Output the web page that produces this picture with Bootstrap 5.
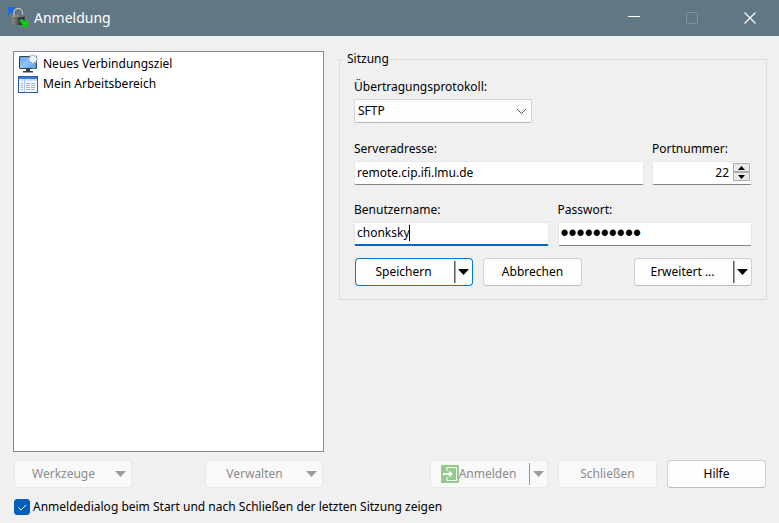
<!DOCTYPE html>
<html lang="de">
<head>
<meta charset="utf-8">
<meta name="viewport" content="width=device-width, initial-scale=1">
<title>Anmeldung</title>
<link href="https://cdn.jsdelivr.net/npm/bootstrap@5.3.0/dist/css/bootstrap.min.css" rel="stylesheet">
<style>
body { font-family: "Noto Sans", sans-serif; font-size: 12px; line-height: 16px; color: #000; background: #f0f0f0; }
.titlebar { height: 36px; background: #627784; color: #fff; padding-left: 8px; }
.titlebar h1 { font-size: 14px; line-height: 20px; margin-left: 6px; }
.caption-btn { width: 58px; height: 36px; border: 0; padding: 0; background: transparent; color: #fff; display: flex; align-items: center; justify-content: center; }
.dialog-main { padding: 15px 12px 8px 13px; }
.dialog-cols { display: grid; grid-template-columns: 311fr 428fr; gap: 15px; }
.site-list { background: #fff; border: 1px solid #828790; padding: 2px 4px; }
.site-list a { height: 20px; color: #000; gap: 5px; }
.session { border: 1px solid #dcdcdc; padding: 12px 14px 13px; }
.session legend { font-size: 12px; line-height: 16px; padding: 0 2px 0 4px; margin-left: -11px; }
.session label { display: block; margin-bottom: 4px; }
.field, .proto { border: 1px solid #e8e8e8; border-bottom-color: #868686; border-radius: 2px; height: 24px; font-size: 12px; line-height: 16px; padding: 0 2px 2px; color: #000; background-color: #fff; width: 100%; }
.field:focus { box-shadow: none; outline: 0; }
.field.active-field { border-bottom: 2px solid #0067c0; }
.proto { width: 178px; padding: 0 3px; border-color: #d3d3d3; border-bottom-color: #b9b9b9; background: #fdfdfd; appearance: none; }
.chevron { position: absolute; right: 5px; top: 9px; pointer-events: none; }
.caret { position: absolute; left: 55px; top: 3px; width: 1px; height: 16px; background: #000; }
.server-row { display: grid; grid-template-columns: 290fr 100fr; gap: 8px; margin-top: 18px; }
.user-row { display: grid; grid-template-columns: 1fr 1fr; gap: 9px; margin-top: 17px; }
.field.port { text-align: right; padding-right: 22px; appearance: textfield; }
.port::-webkit-inner-spin-button { display: none; }
.spin { position: absolute; right: 2px; top: 2px; width: 17px; }
.spin button { height: 9px; border: 1px solid #adadad; background: #e9e9e9; padding: 0; display: flex; align-items: center; justify-content: center; }
.field.pw { font-family: "Liberation Sans", sans-serif; font-size: 23px; }
.wbtn { height: 28px; border: 1px solid #d0d0d0; border-bottom-color: #bcbcbc; border-radius: 4px; background: #fdfdfd; color: #000; padding: 0; font-size: 12px; line-height: 16px; }
.wbtn:disabled { background: #f9f9f9; color: #8b8b8b; border-color: #e8e8e8; opacity: 1; }
.w-std { width: 99px; }
.w-split { width: 118px; }
.split-end { flex: 0 0 19px !important; border-left: 0; }
.split-main { border-right: 0; padding-right: 4px; }
.split-end::before { content: ""; position: absolute; left: 0; top: 2px; bottom: 2px; width: 2px; background: linear-gradient(90deg, #606060 50%, #a5a5a5 50%); }
.split-end:disabled::before { width: 1px; background: #979797; }
.default-btn .wbtn { border-color: #0078d4; }
.menu-btn { padding-right: 5px; gap: 3px; }
.action-row { gap: 10px; margin-top: 12px; padding-left: 1px; }
.footer-cols { margin-top: 8px; }
.footer-left { padding: 0 1px; }
.footer-right { gap: 10px; padding-right: 1px; }
.startup { margin: 11px 0 0 1px; gap: 3px; }
.startup .form-check-input { width: 16px; height: 16px; margin: 0; border-radius: 3px; float: none; background-size: 16px; }
.startup .form-check-input:checked { background-color: #005fb8; border-color: #005fb8; background-image: url("data:image/svg+xml,%3Csvg xmlns='http://www.w3.org/2000/svg' viewBox='0 0 16 16'%3E%3Cpath fill='none' stroke='%23fff' stroke-width='1' d='m4.500 8.500 2.500 2.500 5-5'/%3E%3C/svg%3E"); }
</style>
</head>
<body>
<div class="d-flex flex-column min-vh-100">
  <header class="titlebar d-flex align-items-center">
    <svg width="20" height="22" viewBox="0 0 20 22" aria-hidden="true">
      <defs><linearGradient id="lock"><stop stop-color="#8d8a86"/><stop offset=".3" stop-color="#6b6967"/><stop offset=".65" stop-color="#3a3837"/><stop offset="1" stop-color="#242322"/></linearGradient></defs>
      <path d="M0 0h8L6 2.500 8.500 5 5.500 8 3 5.500 0 8z" fill="#1769ee"/>
      <path d="M6 10V5.500a4.250 4 0 0 1 8.500 0V10" fill="none" stroke="#5c5c5c" stroke-width="3"/>
      <path d="M6 10V5.500a4.250 4 0 0 1 8.500 0V10" fill="none" stroke="#c4c4c4" stroke-width="1.500"/>
      <rect x="4" y="8" width="12.500" height="10" rx="1" fill="url(#lock)"/>
      <path d="M4.500 9h11.500" stroke="#b5b2ae"/>
      <path d="M11.500 14 14 11.500l3 3 3-2.500v8h-8l2.500-2.500z" fill="#0ecb14"/>
    </svg>
    <h1 class="fw-normal mb-0 flex-grow-1">Anmeldung</h1>
    <button class="caption-btn" type="button" aria-label="Minimieren"><svg width="12" height="12"><path d="M0 4.500h12" stroke="#fff"/></svg></button>
    <button class="caption-btn" type="button" aria-label="Maximieren" disabled><svg width="12" height="12"><rect x=".5" y=".5" width="11" height="11" rx="1" fill="none" stroke="#82939d"/></svg></button>
    <button class="caption-btn" type="button" aria-label="Schließen"><svg width="12" height="12"><path d="m.5.5 11 11m0-11-11 11" stroke="#fff" stroke-width="1.200"/></svg></button>
  </header>

  <main class="dialog-main d-flex flex-column flex-grow-1">
    <div class="dialog-cols flex-grow-1">
      <nav class="site-list" aria-label="Verbindungsziele">
        <a href="#" class="d-flex align-items-center text-decoration-none">
          <svg width="20" height="20" viewBox="0 0 20 20" aria-hidden="true">
            <defs><linearGradient id="scr" x2="1" y2="1"><stop stop-color="#5aa0f0"/><stop offset=".5" stop-color="#94c4ff"/><stop offset="1" stop-color="#4b94f2"/></linearGradient></defs>
            <rect x="1.500" y="2.500" width="17" height="12" rx=".5" fill="url(#scr)" stroke="#35414f"/>
            <path d="M2 14h16v1H2z" fill="#35414f"/><path d="M14 13.500h3v1h-3z" fill="#4ae04a"/>
            <path d="M8 15h4v2h3v1.500H5V17h3z" fill="#35414f"/>
            <path d="m15 .5 1.300 1.700 2.200-.7-.2 2.300L20 5.500l-1.900 1.200.1 2.300-2.100-.6L14.500 10l-1.200-1.900-2.300.4.600-2.200L10 4.800l2-1-.2-2.300 2.100.6z" fill="#eef5fc" stroke="#7896b8" stroke-width=".7"/>
          </svg>
          <span>Neues Verbindungsziel</span>
        </a>
        <a href="#" class="d-flex align-items-center text-decoration-none">
          <svg width="20" height="17" viewBox="0 0 20 17" aria-hidden="true">
            <rect x=".5" y=".5" width="19" height="16" fill="#f5f9fe" stroke="#285bac"/>
            <path d="M1 1h18v2H1z" fill="#3b7ddc"/><path d="M1 3h18v2H1z" fill="#d5e6fb"/>
            <path d="M6.500 3v13M12.500 3v2M16.500 3v2" stroke="#a8caf5"/>
            <path d="M3 7.500h2M3 9.500h2M3 11.500h2M3 13.500h2M8 7.500h9M8 9.500h9M8 11.500h9M8 13.500h9" stroke="#a3b4cb" stroke-dasharray="4 1"/>
          </svg>
          <span>Mein Arbeitsbereich</span>
        </a>
      </nav>

      <form>
        <fieldset class="session">
          <legend class="float-none w-auto mb-0">Sitzung</legend>
          <label for="proto">Übertragungsprotokoll:</label>
          <div class="position-relative d-inline-block align-top">
            <select id="proto" class="proto"><option>SFTP</option><option>SCP</option><option>FTP</option></select>
            <svg class="chevron" width="11" height="7"><path d="m1 1 4.500 4.500L10 1" fill="none" stroke="#555"/></svg>
          </div>
          <div class="server-row">
            <div><label for="host">Serveradresse:</label><input id="host" class="field d-block" type="text" value="remote.cip.ifi.lmu.de"></div>
            <div><label for="port">Portnummer:</label>
              <div class="position-relative">
                <input id="port" class="field port d-block" type="number" value="22">
                <div class="spin d-flex flex-column">
                  <button type="button" aria-label="Erhöhen"><svg width="7" height="4"><path d="M3.500 0 7 4H0z"/></svg></button>
                  <button type="button" aria-label="Verringern"><svg width="7" height="4"><path d="M3.500 4 7 0H0z"/></svg></button>
                </div>
              </div>
            </div>
          </div>
          <div class="user-row">
            <div><label for="user">Benutzername:</label>
              <div class="position-relative"><input id="user" class="field active-field d-block" type="text" value="chonksky"><span class="caret"></span></div>
            </div>
            <div><label for="pass">Passwort:</label><input id="pass" class="field pw d-block" type="password" value="0000000000"></div>
          </div>
          <div class="action-row d-flex">
            <div class="btn-group w-split default-btn">
              <button type="button" class="btn wbtn split-main">Speichern</button>
              <button type="button" class="btn wbtn split-end" aria-label="Speicheroptionen"><svg class="d-block mx-auto" width="11" height="6"><path d="M0 0h11L5.500 6z"/></svg></button>
            </div>
            <button type="button" class="btn wbtn w-std">Abbrechen</button>
            <div class="btn-group w-split ms-auto">
              <button type="button" class="btn wbtn split-main">Erweitert ...</button>
              <button type="button" class="btn wbtn split-end" aria-label="Weitere Optionen"><svg class="d-block mx-auto" width="11" height="6"><path d="M0 0h11L5.500 6z"/></svg></button>
            </div>
          </div>
        </fieldset>
      </form>
    </div>

    <div class="dialog-cols footer-cols">
      <div class="footer-left d-flex justify-content-between">
        <button type="button" class="btn wbtn w-split menu-btn d-flex align-items-center" disabled><span class="flex-grow-1">Werkzeuge</span><svg width="11" height="6" fill="#9c9c9c"><path d="M0 0h11L5.500 6z"/></svg></button>
        <button type="button" class="btn wbtn w-split menu-btn d-flex align-items-center" disabled><span class="flex-grow-1">Verwalten</span><svg width="11" height="6" fill="#9c9c9c"><path d="M0 0h11L5.500 6z"/></svg></button>
      </div>
      <div class="footer-right d-flex justify-content-end">
        <div class="btn-group w-split">
          <button type="button" class="btn wbtn split-main d-flex align-items-center justify-content-center" disabled>
            <svg width="18" height="18" viewBox="0 0 18 18" aria-hidden="true"><rect width="18" height="18" rx="1" fill="#92cc8c"/><path d="M6 6V2.500h9.500v13H6V12" fill="none" stroke="#fff"/><path d="M2 8h6V5.500L12 9l-4 3.500V10H2z" fill="#fff"/></svg>
            <span>Anmelden</span>
          </button>
          <button type="button" class="btn wbtn split-end" aria-label="Anmeldeoptionen" disabled><svg class="d-block mx-auto" width="11" height="6" fill="#9c9c9c"><path d="M0 0h11L5.500 6z"/></svg></button>
        </div>
        <button type="button" class="btn wbtn w-std" disabled>Schließen</button>
        <button type="button" class="btn wbtn w-std">Hilfe</button>
      </div>
    </div>

    <div class="startup d-flex align-items-center">
      <input id="startup" class="form-check-input" type="checkbox" checked>
      <label for="startup">Anmeldedialog beim Start und nach Schließen der letzten Sitzung zeigen</label>
    </div>
  </main>
</div>
<script src="https://cdn.jsdelivr.net/npm/bootstrap@5.3.0/dist/js/bootstrap.bundle.min.js"></script>
</body>
</html>
